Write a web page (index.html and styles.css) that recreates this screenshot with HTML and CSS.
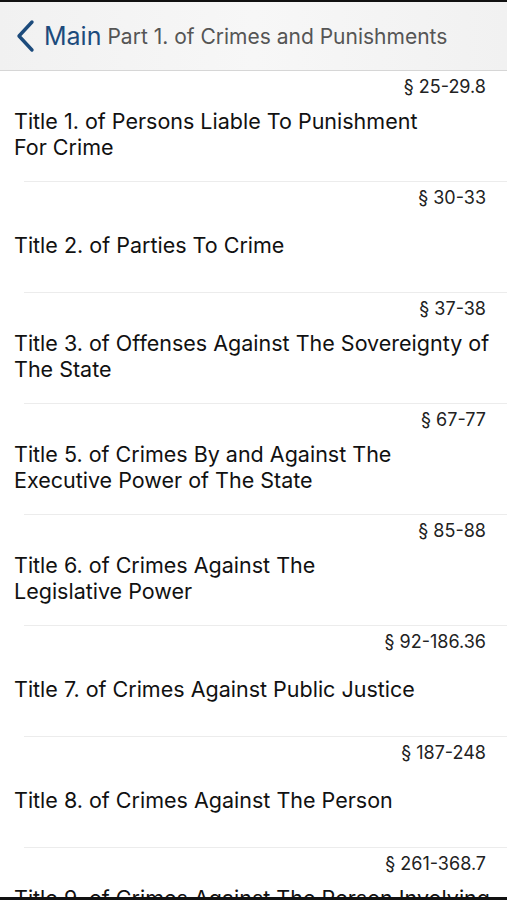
FILE: index.html
```html
<!DOCTYPE html>
<html lang="en">
<head>
  <meta charset="UTF-8">
  <title>Part 1. of Crimes and Punishments</title>
  <link rel="stylesheet" href="styles.css">
</head>
<body>

  <div class="nav-bar">
    <a class="back" href="#">
      <svg class="chevron" width="20" height="34" viewBox="0 0 20 34">
        <path d="M17 3 L4 17 L17 31" fill="none" stroke="#1c4b7c" stroke-width="3.4" stroke-linecap="round" stroke-linejoin="round"/>
      </svg>
      <span>Main</span>
    </a>
    <div class="nav-title">Part 1. of Crimes and Punishments</div>
  </div>

  <ul class="title-list">
    <li class="title-row">
      <div class="range">§ 25-29.8</div>
      <div class="name">Title 1. of Persons Liable To Punishment<br>For Crime</div>
    </li>
    <li class="title-row">
      <div class="range">§ 30-33</div>
      <div class="name">Title 2. of Parties To Crime</div>
    </li>
    <li class="title-row">
      <div class="range">§ 37-38</div>
      <div class="name">Title 3. of Offenses Against The Sovereignty of<br>The State</div>
    </li>
    <li class="title-row">
      <div class="range">§ 67-77</div>
      <div class="name">Title 5. of Crimes By and Against The<br>Executive Power of The State</div>
    </li>
    <li class="title-row">
      <div class="range">§ 85-88</div>
      <div class="name">Title 6. of Crimes Against The<br>Legislative Power</div>
    </li>
    <li class="title-row">
      <div class="range">§ 92-186.36</div>
      <div class="name">Title 7. of Crimes Against Public Justice</div>
    </li>
    <li class="title-row">
      <div class="range">§ 187-248</div>
      <div class="name">Title 8. of Crimes Against The Person</div>
    </li>
    <li class="title-row">
      <div class="range">§ 261-368.7</div>
      <div class="name">Title 9. of Crimes Against The Person Involving<br>Sexual Assault</div>
    </li>
  </ul>

  <div class="bottom-edge"></div>

</body>
</html>
```

FILE: styles.css
```css
body {
  font-family: 'Inter', 'Liberation Sans', sans-serif;
  background: #ffffff;
  color: #111111;
  margin: 0;
  border-top: 2px solid #111111;
  height: 898px;
  overflow: hidden;
}

.nav-bar {
  display: flex;
  align-items: center;
  height: 68px;
  padding: 0 15px;
  background: linear-gradient(to right, #f1f1f1, #f7f7f7 50%, #f1f1f1);
  border-bottom: 1px solid #d6d6d6;
}

.back {
  display: flex;
  align-items: center;
  gap: 9px;
  color: #1c4b7c;
  text-decoration: none;
  font-size: 25px;
}

.nav-title {
  margin-left: 6px;
  font-size: 21px;
  color: #555555;
  white-space: nowrap;
}

.title-list {
  list-style: none;
  margin: 0;
  padding: 0;
}

/* separator line starts 24px in, like an iOS table inset */
.title-row {
  display: flex;
  flex-direction: column;
  height: 111px;
  padding-left: 14px;
  overflow: hidden;
  background: linear-gradient(#ececec, #ececec) no-repeat 24px 100% / calc(100% - 24px) 1px;
}

.range {
  height: 32px;
  line-height: 32px;
  text-align: right;
  padding-right: 21px;
  font-size: 18px;
  color: #222222;
}

.name {
  flex: 1;
  display: flex;
  align-items: center;
  padding: 0 10px 17px 0;
  font-size: 21.5px;
  line-height: 26px;
  color: #111111;
  white-space: nowrap;
}

.bottom-edge {
  position: fixed;
  left: 0;
  right: 0;
  bottom: 0;
  height: 3px;
  background: #111111;
}
```
